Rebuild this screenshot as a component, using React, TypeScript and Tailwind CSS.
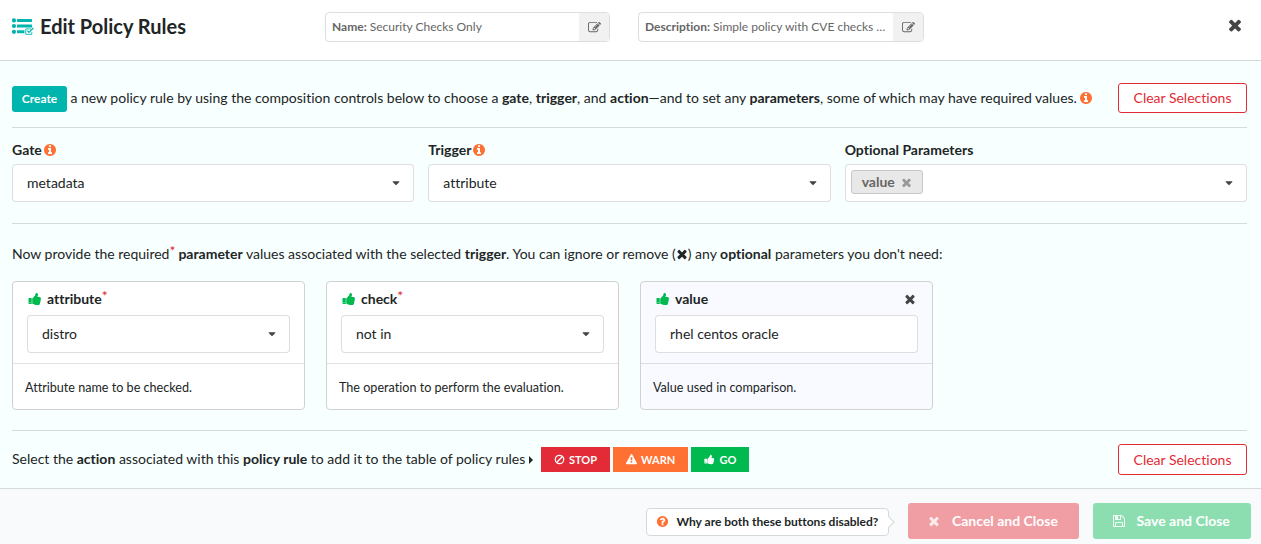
import type { ReactNode } from 'react';

const CIRCLE =
  'm640 416q0 209-103 385.5t-279.5 279.5-385.5 103-385.5-103-279.5-279.5-103-385.5 103-385.5 279.5-279.5 385.5-103 385.5 103 279.5 279.5 103 385.5z';

const PATHS = {
  times:
    'M1490 1322q0 40-28 68l-136 136q-28 28-68 28t-68-28l-294-294-294 294q-28 28-68 28t-68-28l-136-136q-28-28-28-68t28-68l294-294-294-294q-28-28-28-68t28-68l136-136q28-28 68-28t68 28l294 294 294-294q28-28 68-28t68 28l136 136q28 28 28 68t-28 68l-294 294 294 294q28 28 28 68z',
  caret:
    'M1408 704q0 26-19 45l-448 448q-19 19-45 19t-45-19l-448-448q-19-19-19-45t19-45 45-19h896q26 0 45 19t19 45z',
  info:
    'M1152 1376v-160q0-14-9-23t-23-9h-96v-512q0-14-9-23t-23-9h-320q-14 0-23 9t-9 23v160q0 14 9 23t23 9h96v320h-96q-14 0-23 9t-9 23v160q0 14 9 23t23 9h448q14 0 23-9t9-23zm-128-896v-160q0-14-9-23t-23-9h-192q-14 0-23 9t-9 23v160q0 14 9 23t23 9h192q14 0 23-9t9-23z' +
    CIRCLE,
  question:
    'M1024 1376v-192q0-14-9-23t-23-9h-192q-14 0-23 9t-9 23v192q0 14 9 23t23 9h192q14 0 23-9t9-23zm256-672q0-88-55.5-163t-138.5-116-170-41q-243 0-371 213-15 24 8 42l132 100q7 6 19 6 16 0 25-12 53-68 86-92 34-24 86-24 48 0 85.5 26t37.5 59q0 38-20 61t-68 45q-63 28-115.5 86.5t-52.5 125.5v36q0 14 9 23t23 9h192q14 0 23-9t9-23q0-19 21.5-49.5t54.5-49.5q32-18 49-28.5t46-35 44.5-48 28-60.5 12.5-81zm384 192q0 209-103 385.5t-279.5 279.5-385.5 103-385.5-103-279.5-279.5-103-385.5 103-385.5 279.5-279.5 385.5-103 385.5 103 279.5 279.5 103 385.5z',
  thumb:
    'M320 1344q0-26-19-45t-45-19q-27 0-45.5 19t-18.5 45q0 27 18.5 45.5t45.5 18.5q26 0 45-18.5t19-45.5zm160-512v640q0 26-19 45t-45 19h-288q-26 0-45-19t-19-45v-640q0-26 19-45t45-19h288q26 0 45 19t19 45zm1184 0q0 86-55 149 15 44 15 76 3 76-43 137 17 56 0 117-15 57-54 94 9 112-49 181-64 76-197 78h-129q-66 0-144-15.5t-121.5-29-120.5-39.5q-123-43-158-44-26-1-45-19.5t-19-44.5v-641q0-25 18-43.5t43-20.5q24-2 76-59t101-121q68-87 101-120 18-18 31-48t17.5-48.5 13.5-60.5q7-39 12.5-61t19.5-52 34-50q19-19 45-19 46 0 82.5 10.5t60 26 40 40.5 24 45 12 50 5 45 .5 39q0 38-9.5 76t-19 60-27.5 56q-3 6-10 18t-11 22-8 24h277q78 0 135 57t57 135z',
  edit:
    'M888 1184l116-116-152-152-116 116v56h96v96h56zm440-720q-16-16-33 1l-350 350q-17 17-1 33t33-1l350-350q17-17 1-33zm80 594v190q0 119-84.5 203.5t-203.5 84.5h-832q-119 0-203.5-84.5t-84.5-203.5v-832q0-119 84.5-203.5t203.5-84.5h832q63 0 117 25 15 7 18 23 3 17-9 29l-49 49q-14 14-32 8-23-6-45-6h-832q-66 0-113 47t-47 113v832q0 66 47 113t113 47h832q66 0 113-47t47-113v-126q0-13 9-22l64-64q15-15 35-7t20 29zm-96-738l288 288-672 672h-288v-288zm444 132l-92 92-288-288 92-92q28-28 68-28t68 28l152 152q28 28 28 68t-28 68z',
  save:
    'M512 1536h768v-384h-768v384zm896 0h128v-896q0-14-10-38.5t-20-34.5l-281-281q-10-10-34-20t-39-10v416q0 40-28 68t-68 28h-576q-40 0-68-28t-28-68v-416h-128v1280h128v-416q0-40 28-68t68-28h832q40 0 68 28t28 68v416zm-384-928v-320q0-13-9.5-22.5t-22.5-9.5h-192q-13 0-22.5 9.5t-9.5 22.5v320q0 13 9.5 22.5t22.5 9.5h192q13 0 22.5-9.5t9.5-22.5zm640 32v928q0 40-28 68t-68 28h-1344q-40 0-68-28t-28-68v-1344q0-40 28-68t68-28h928q40 0 88 20t76 48l280 280q28 28 48 76t20 88z',
  warning:
    'M1024 1375v-190q0-14-9.5-23.5t-22.5-9.5h-192q-13 0-22.5 9.5t-9.5 23.5v190q0 14 9.5 23.5t22.5 9.5h192q13 0 22.5-9.5t9.5-23.5zm-2-374l18-459q0-12-10-19-13-11-24-11h-220q-11 0-24 11-10 7-10 21l17 457q0 10 10 16.5t24 6.5h185q14 0 23.5-6.5t10.5-16.5zm-14-934l768 1408q35 63-2 126-17 29-46.5 46t-63.5 17h-1536q-34 0-63.5-17t-46.5-46q-37-63-2-126l768-1408q17-31 47-49t65-18 65 18 47 49z',
};

function Icon({ name, className }: { name: keyof typeof PATHS; className: string }) {
  return (
    <svg viewBox="0 0 1792 1792" fill="currentColor" className={`shrink-0 ${className}`}>
      <path d={PATHS[name]} />
    </svg>
  );
}

function RulesIcon() {
  return (
    <svg viewBox="0 0 22 17" className="h-[17px] w-[22px] shrink-0" fill="#00b5ad">
      <circle cx="2" cy="2.4" r="2.1" />
      <circle cx="2" cy="8" r="2.1" />
      <circle cx="2" cy="13.8" r="2.1" />
      <rect x="5" y="1" width="15" height="3" rx=".4" />
      <rect x="5" y="6.6" width="15" height="3" rx=".4" />
      <rect x="5" y="12.2" width="7.5" height="3" rx=".4" />
      <path d="M19.2 10.9h-5.4v5.4h6v-2.2" fill="none" stroke="#00b5ad" strokeWidth=".9" />
      <path d="M15.4 12.6l1.6 1.8 4.4-4.4" fill="none" stroke="#00b5ad" strokeWidth="1.2" />
    </svg>
  );
}

function Field({ label, value, className }: { label: string; value: string; className: string }) {
  return (
    <div className={`flex h-[30px] rounded border border-[#22242626] text-[12px] text-[#666] ${className}`}>
      <div className="flex flex-1 items-center gap-[3px] whitespace-pre pl-1.5">
        <b>{label}</b>
        <span>{value}</span>
      </div>
      <div className="flex w-[30px] items-center justify-center bg-[#f1f1f1]">
        <Icon name="edit" className="size-[13px]" />
      </div>
    </div>
  );
}

function Select({ children, plain }: { children: ReactNode; plain?: boolean }) {
  return (
    <div className="flex h-[38px] items-center justify-between rounded border border-[#22242626] bg-white pr-[11px] pl-[14px]">
      {children}
      {!plain && <Icon name="caret" className="size-[12px] text-[#444]" />}
    </div>
  );
}

function Card(props: { name: string; value: string; note: string; required?: boolean }) {
  const { name, value, note, required } = props;
  return (
    <div
      className={`h-[129px] w-[293px] rounded border border-[#d0d1d1] ${required ? 'bg-white' : 'bg-[#f9faff]'}`}
    >
      <div className="h-[82px] border-b border-[#22242622] px-[14px]">
        <div className="flex h-[33px] items-center pt-px">
          <Icon name="thumb" className="mr-[5px] ml-px size-[14px] text-[#00ba4f]" />
          <b>{name}</b>
          {required && <Star />}
          {!required && <Icon name="times" className="mr-[1px] ml-auto size-[14px] text-[#444]" />}
        </div>
        <Select plain={!required}>{value}</Select>
      </div>
      <div className="flex h-[46px] items-center pt-px pl-3 text-[12.6px]">{note}</div>
    </div>
  );
}

function Star() {
  return <span className="relative -top-[3px] text-[14px] leading-none text-[#e3242b]">*</span>;
}

function Clear({ className }: { className: string }) {
  return (
    <button className={`w-[129px] rounded-[3px] border border-[#e22b36] bg-white text-[#e22b36] ${className}`}>
      Clear Selections
    </button>
  );
}

export default function App() {
  return (
    <div className="flex h-[544px] w-[1261px] flex-col overflow-hidden bg-white font-['Lato',sans-serif] text-[14px] leading-5 text-[#212525] [font-variant-ligatures:none]">
      <header className="flex h-[61px] border-b border-[#d4dbdb] pt-3 pl-3">
        <div className="flex h-[28px] w-[313px] items-center gap-1.5">
          <RulesIcon />
          <h1 className="text-[20px] font-bold">Edit Policy Rules</h1>
        </div>
        <Field label="Name:" value="Security Checks Only" className="w-[285px]" />
        <Field label="Description:" value="Simple policy with CVE checks …" className="ml-7 w-[286px]" />
        <Icon name="times" className="mt-1 mr-[17px] ml-auto size-[18px] text-[#444]" />
      </header>

      <main className="h-[428px] border-b border-[#d4dbdb] bg-[#f8ffff] pr-[14px] pl-3">
        <div className="flex h-[67px] items-center border-b border-[#d3dcdc] pt-[8px]">
          <span className="mt-[2px] flex h-[26px] w-[55px] items-center justify-center rounded-[3px] bg-[#00b5ad] text-[12px] font-bold text-white">
            Create
          </span>
          <p className="ml-[3.4px] whitespace-nowrap">
            a new policy rule by using the composition controls below to choose a <b>gate</b>, <b>trigger</b>, and{' '}
            <b>action</b>—and to set any <b>parameters</b>, some of which may have required values.
          </p>
          <Icon name="info" className="mr-auto ml-[2px] size-[14px] text-[#ff7033]" />
          <Clear className="h-[30px]" />
        </div>

        <div className="grid h-[96px] grid-cols-3 gap-x-[14px] border-b border-[#d3dcdc] pt-3">
          {[
            ['Gate', 'metadata'],
            ['Trigger', 'attribute'],
          ].map(([label, value]) => (
            <div key={label}>
              <div className="flex h-6 items-center gap-px pb-1 font-bold">
                {label}
                <Icon name="info" className="size-[14px] text-[#ff7033]" />
              </div>
              <Select>{value}</Select>
            </div>
          ))}
          <div>
            <div className="flex h-6 items-center pb-1 font-bold">Optional Parameters</div>
            <Select>
              <span className="-ml-[9px] flex h-6 w-[72px] -translate-y-px items-center rounded-[3px] border border-[#c6c7c7] bg-[#e8e8e8] pl-[10px] font-bold text-[#666]">
                value
                <Icon name="times" className="ml-[5px] size-[13px] text-[#999]" />
              </span>
            </Select>
          </div>
        </div>

        <div className="flex h-[57px] items-center pt-[2px] whitespace-pre">
          Now provide the required
          <Star />
          <b className="ml-[3px]">parameter</b> values associated with the selected <b>trigger</b>. You can ignore or
          {' remove ('}
          <Icon name="times" className="-mx-px size-[14px]" />) any <b>optional</b> parameters you don't need:
        </div>

        <div className="flex h-[150px] gap-[21px] border-b border-[#d3dcdc]">
          <Card name="attribute" value="distro" note="Attribute name to be checked." required />
          <Card name="check" value="not in" note="The operation to perform the evaluation." required />
          <Card name="value" value="rhel centos oracle" note="Value used in comparison." />
        </div>

        <div className="flex h-[57px] items-center text-white">
          <p className="-mt-[2px] whitespace-nowrap text-[#212525]">
            Select the <b>action</b> associated with this <b>policy rule</b> to add it to the table of policy rules
          </p>
          <svg viewBox="0 0 4 8" className="mr-auto ml-[4px] h-[8px] w-[4px] fill-[#212525]">
            <path d="M0 0L4 4L0 8Z" />
          </svg>
          <div className="mr-[369px] flex gap-[3px] text-[11px] font-bold">
            <span className="flex h-[25px] w-[69px] items-center bg-[#e22b36] pl-[13px]">
              <svg viewBox="0 0 12 12" className="mr-[4px] size-[11px]" fill="none" stroke="#fff" strokeWidth="1.4">
                <circle cx="6" cy="6" r="4.6" />
                <path d="M2.8 9.2L9.2 2.8" />
              </svg>
              STOP
            </span>
            <span className="flex h-[25px] w-[75px] items-center bg-[#ff7033] pl-[13px]">
              <Icon name="warning" className="mr-[4px] size-[11px]" />
              WARN
            </span>
            <span className="flex h-[25px] w-[58px] items-center bg-[#00ba4f] pl-[13px]">
              <Icon name="thumb" className="mr-[4.5px] size-[11px]" />
              GO
            </span>
          </div>
          <Clear className="mt-px mb-[2px] h-[31px] pt-px" />
        </div>
      </main>

      <footer className="flex h-[55px] justify-end bg-[#f9fafb] pt-[14px] pr-[10px] text-white">
        <div className="relative mt-[5px] mr-[19px] flex h-[28px] w-[243px] items-center rounded border border-[#d4d9dc] bg-white pl-[9px] text-[12px] font-bold text-[#212525]">
          <Icon name="question" className="mr-[7.5px] mb-px size-[13px] text-[#ff7033]" />
          Why are both these buttons disabled?
          <span className="absolute top-[9px] -right-[5px] size-[8px] rotate-45 border-t border-r border-[#d4d9dc] bg-white" />
        </div>
        <div className="mr-[14px] flex h-9 w-[171px] items-center rounded-[3px] bg-[#f09ea3] pl-[19px] font-bold">
          <Icon name="times" className="mr-[11px] size-[14px] opacity-80" />
          Cancel and Close
        </div>
        <div className="flex h-9 w-[158px] items-center rounded-[3px] bg-[#8cdeb0] pl-[19px] font-bold">
          <Icon name="save" className="mr-[10.5px] size-[14px] opacity-90" />
          Save and Close
        </div>
      </footer>
    </div>
  );
}
